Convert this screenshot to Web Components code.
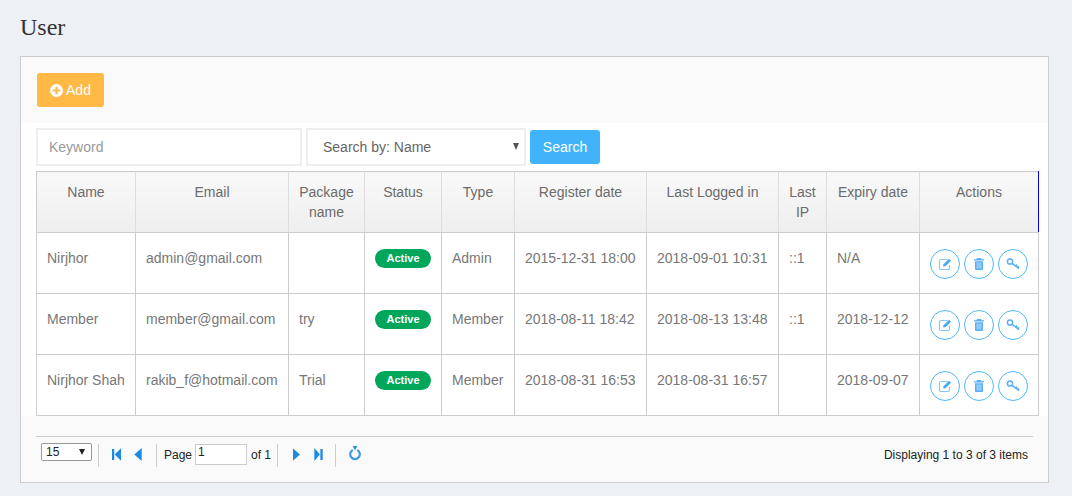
<!DOCTYPE html>
<html>
<head>
<meta charset="utf-8">
<title>User</title>
<style>
  html, body { margin: 0; padding: 0; background: #edf0f5; }
  body { font-family: "Liberation Sans", Arial, sans-serif; width: 1072px; height: 496px; overflow: hidden; }
</style>
</head>
<body>
<user-page heading="User">
  <search-bar slot="search"></search-bar>
  <user-table slot="table"></user-table>
  <pager-bar slot="pager"></pager-bar>
</user-page>

<script>
//Page frame: title, panel, toolbar and footer
class UserPage extends HTMLElement {
  constructor() {
    super();
    this.attachShadow({ mode: "open" });
    this.shadowRoot.innerHTML = `
    <style>
      :host { display: block; padding: 14px 23px 0 20px; }
      h1 { margin: 0; height: 42px; font: 400 24px/27px "Liberation Serif", "Times New Roman", serif; color: #333; }
      .panel { border: 1px solid #ccc; background: #fff; height: 425px; display: flex; flex-direction: column; }
      .top { background: #fafafa; height: 66px; box-sizing: border-box; padding: 16px; }
      .add { display: inline-flex; align-items: center; gap: 3px; box-sizing: border-box; width: 67px; height: 34px; justify-content: center;
        background: #ffb944; color: #fff; border-radius: 3px; font-size: 14px; }
      .add svg { width: 13px; height: 13px; }
      .mid { height: 293px; padding: 5px 10px 0 15px; box-sizing: border-box; display: flex; flex-direction: column; gap: 5px; }
      .foot { flex: 1; background: #fafafa; padding: 20px 15px 0 15px; }
    </style>
    <h1></h1>
    <div class="panel">
      <div class="top">
        <span class="add">
          <svg viewBox="0 0 24 24"><path fill="#fff" fill-rule="evenodd" d="M12 0a12 12 0 1 0 0 24 12 12 0 0 0 0-24zM10 5h4v5h5v4h-5v5h-4v-5H5v-4h5z"/></svg>
          Add
        </span>
      </div>
      <div class="mid"><slot name="search"></slot><slot name="table"></slot></div>
      <div class="foot"><slot name="pager"></slot></div>
    </div>`;
    this.shadowRoot.querySelector("h1").textContent = this.getAttribute("heading");
  }
}
customElements.define("user-page", UserPage);

//Keyword box, search-by select and button
class SearchBar extends HTMLElement {
  constructor() {
    super();
    this.attachShadow({ mode: "open" });
    this.shadowRoot.innerHTML = `
    <style>
      :host { display: flex; align-items: center; gap: 4px; height: 38px; font-size: 14px; color: #666; }
      .box { box-sizing: border-box; height: 38px; border: 2px solid #eee; background: #fff; display: flex; align-items: center; }
      .keyword { width: 266px; padding-left: 11px; color: #999; }
      .select { width: 220px; padding-left: 15px; justify-content: space-between; padding-right: 5px; }
      .arrow { width: 0; height: 0; border-left: 3.5px solid transparent; border-right: 3.5px solid transparent; border-top: 7px solid #555; margin-top: -2px; }
      .go { box-sizing: border-box; width: 70px; height: 34px; background: #40b3fb; color: #fff; border-radius: 3px;
        display: flex; align-items: center; justify-content: center; }
    </style>
    <div class="box keyword">Keyword</div>
    <div class="box select"><span>Search by: Name</span><span class="arrow"></span></div>
    <div class="go">Search</div>`;
  }
}
customElements.define("search-bar", SearchBar);

//Green pill in the status column
class StatusBadge extends HTMLElement {
  constructor() {
    super();
    this.attachShadow({ mode: "open" });
    this.shadowRoot.innerHTML = `
    <style>
      :host { display: inline-block; width: 56px; height: 19px; border-radius: 10px; background: #00a65a; color: #fff;
        font-size: 11px; font-weight: 700; line-height: 19px; text-align: center; vertical-align: middle; }
    </style>
    <slot></slot>`;
  }
}
customElements.define("status-badge", StatusBadge);

const actionIcons = {
  edit: `<path fill="none" stroke="#8cc6f8" stroke-width="1.2" d="M9.5 2.500H3A1.500 1.500 0 0 0 1.500 4v7A1.500 1.500 0 0 0 3 12.500h7a1.500 1.500 0 0 0 1.500-1.500V8"/><path fill="#4aa8f5" d="M5.500 7.200 11 1.700l2 2-5.500 5.500-2.400.4z"/>`,
  trash: `<path fill="#5aaff7" d="M5 1h4l.6 1.200H12v1.300H2V2.200h2.400zM3 4.200h8V12a1 1 0 0 1-1 1H4a1 1 0 0 1-1-1z"/><path stroke="#cfe8fc" stroke-width=".8" d="M5.200 5.500v6M7 5.500v6M8.800 5.500v6"/>`,
  key: `<circle cx="4" cy="4.500" r="2.600" fill="none" stroke="#5aaff7" stroke-width="1.500"/><path stroke="#5aaff7" stroke-width="1.600" fill="none" d="M6 6.300 13 11.500M9.800 9.200l1.200-1.600M11.800 10.600l1-1.400"/>`
};

//Round outlined button in the actions column
class ActionButton extends HTMLElement {
  constructor() {
    super();
    this.attachShadow({ mode: "open" });
    this.shadowRoot.innerHTML = `
    <style>
      :host { display: flex; box-sizing: border-box; width: 30px; height: 30px; border: 1px solid #4db8fb; border-radius: 50%;
        align-items: center; justify-content: center; background: #fff; }
      svg { width: 14px; height: 14px; }
    </style>
    <svg viewBox="0 0 14 14">${actionIcons[this.getAttribute("icon")]}</svg>`;
  }
}
customElements.define("action-button", ActionButton);

const users = [
  ["Nirjhor", "admin@gmail.com", "", "Admin", "2015-12-31 18:00", "2018-09-01 10:31", "::1", "N/A"],
  ["Member", "member@gmail.com", "try", "Member", "2018-08-11 18:42", "2018-08-13 13:48", "::1", "2018-12-12"],
  ["Nirjhor Shah", "rakib_f@hotmail.com", "Trial", "Member", "2018-08-31 16:53", "2018-08-31 16:57", "", "2018-09-07"]
];

//Data table
class UserTable extends HTMLElement {
  constructor() {
    super();
    this.attachShadow({ mode: "open" });
    const rows = users.map(u => `
      <tr>
        <td>${u[0]}</td><td>${u[1]}</td><td>${u[2]}</td>
        <td class="c"><status-badge>Active</status-badge></td>
        <td>${u[3]}</td><td>${u[4]}</td><td>${u[5]}</td><td>${u[6]}</td><td>${u[7]}</td>
        <td class="acts"><div><action-button icon="edit"></action-button><action-button icon="trash"></action-button><action-button icon="key"></action-button></div></td>
      </tr>`).join("");
    this.shadowRoot.innerHTML = `
    <style>
      :host { display: block; width: 1003px; font-size: 14px; color: #777; }
      table { border-collapse: collapse; table-layout: fixed; width: 1003px; }
      th, td { border: 1px solid #ccc; padding: 0 10px; }
      th { height: 61px; padding-top: 10px; padding-left: 4px; padding-right: 4px; box-sizing: border-box; vertical-align: top; font-weight: 400; line-height: 20px; text-align: center;
        background: linear-gradient(#f9f9f9, #eeeeee); color: #6b6b6b; border-color: #ddd #ddd #ccc #ddd; }
      tr:first-child th { border-top-color: #ccc; }
      th:first-child { border-left-color: #ccc; }
      th:last-child { border-right: 1px solid #0000ff; }
      td { height: 61px; box-sizing: border-box; line-height: 20px; padding-bottom: 10px; white-space: nowrap; }
      td.c { text-align: center; padding: 0 0 10px; }
      td.acts { padding: 0 0 0 10px; }
      .acts div { display: flex; gap: 4px; padding-top: 1px; }
    </style>
    <table>
      <colgroup>
        <col style="width:99px"><col style="width:153px"><col style="width:76px"><col style="width:77px"><col style="width:73px">
        <col style="width:132px"><col style="width:132px"><col style="width:48px"><col style="width:93px"><col style="width:119px">
      </colgroup>
      <tr><th>Name</th><th>Email</th><th>Package name</th><th>Status</th><th>Type</th><th>Register date</th><th>Last Logged in</th><th>Last IP</th><th>Expiry date</th><th>Actions</th></tr>
      ${rows}
    </table>`;
  }
}
customElements.define("user-table", UserTable);

//Datagrid style pagination footer
class PagerBar extends HTMLElement {
  constructor() {
    super();
    this.attachShadow({ mode: "open" });
    this.shadowRoot.innerHTML = `
    <style>
      :host { display: flex; align-items: center; height: 37px; box-sizing: border-box; border-top: 1px solid #ccc; width: 997px;
        padding: 0 5px; font-size: 12px; color: #222; }
      .size { box-sizing: border-box; width: 51px; height: 18px; border: 1px solid #999; border-radius: 2px; background: #fff;
        display: flex; align-items: center; justify-content: space-between; padding: 0 6px 0 4px; margin-top: -6px; }
      .tri { width: 0; height: 0; border-left: 3.5px solid transparent; border-right: 3.5px solid transparent; border-top: 6px solid #222; }
      .sep { width: 1px; height: 23px; background: #ccc; }
      svg { display: block; }
      .num { box-sizing: border-box; width: 52px; height: 21px; border: 1px solid #ccc; background: #fff; padding: 0 2px 4px; line-height: 14px; margin: -1px 4px 0 3px; }
      .info { margin-left: auto; }
      .page { display: flex; align-items: center; margin: 0 6px 0 7px; }
    </style>
    <div class="size"><span>15</span><span class="tri"></span></div>
    <div class="sep" style="margin-left:6px"></div>
    <svg style="margin-left:13px;margin-top:-2px" width="9" height="13" viewBox="0 0 10 14"><path fill="#1e88e5" d="M0 1h2.500v12H0zM10 0v14L3 7z"/></svg>
    <svg style="margin-left:13px;margin-right:14px;margin-top:-2px" width="8" height="13" viewBox="0 0 8 14"><path fill="#1e88e5" d="M8 0v14L0 7z"/></svg>
    <div class="sep"></div>
    <div class="page"><span>Page</span><span class="num">1</span><span>of 1</span></div>
    <div class="sep"></div>
    <svg style="margin-left:15px;margin-top:-2px" width="7" height="13" viewBox="0 0 8 14"><path fill="#1e88e5" d="M0 0v14l8-7z"/></svg>
    <svg style="margin-left:14px;margin-right:12px;margin-top:-2px" width="9" height="13" viewBox="0 0 9 14"><path fill="#1e88e5" d="M0 0v14l6-7zM6.500 1H9v12H6.500z"/></svg>
    <div class="sep"></div>
    <svg style="margin-left:13px;margin-top:-3px" width="12" height="15" viewBox="0 0 12 15"><path fill="none" stroke="#3f9be8" stroke-width="2.200" d="M3.800 4a4.800 4.800 0 1 0 4.400 0"/><path fill="#1e88e5" d="M3.800 0h4.400L6 4.500z"/></svg>
    <span class="info">Displaying 1 to 3 of 3 items</span>`;
  }
}
customElements.define("pager-bar", PagerBar);
</script>
</body>
</html>
